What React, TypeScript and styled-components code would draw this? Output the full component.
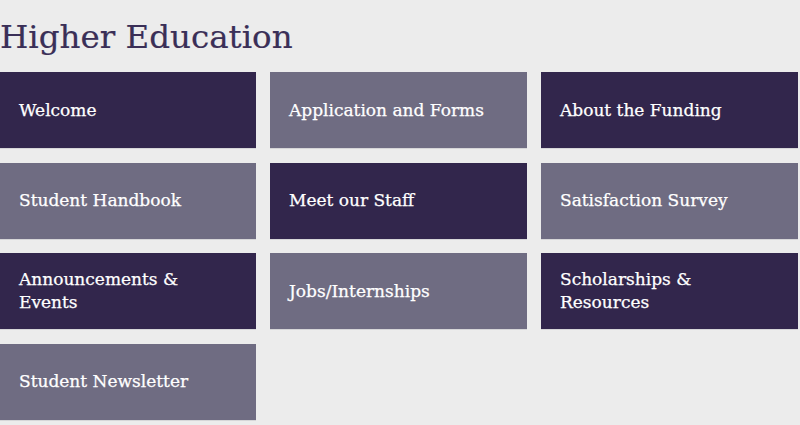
import React from 'react';
import styled, { createGlobalStyle } from 'styled-components';

const GlobalStyle = createGlobalStyle`
  html, body {
    margin: 0;
    padding: 0;
    background: #ececec;
  }
  body {
    font-family: "DejaVu Serif", "Liberation Serif", serif;
  }
`;

type Tone = 'dark' | 'light';

interface Tile {
  label: string;
  tone: Tone;
}

const tiles: Tile[] = [
  { label: 'Welcome', tone: 'dark' },
  { label: 'Application and Forms', tone: 'light' },
  { label: 'About the Funding', tone: 'dark' },
  { label: 'Student Handbook', tone: 'light' },
  { label: 'Meet our Staff', tone: 'dark' },
  { label: 'Satisfaction Survey', tone: 'light' },
  { label: 'Announcements & Events', tone: 'dark' },
  { label: 'Jobs/Internships', tone: 'light' },
  { label: 'Scholarships & Resources', tone: 'dark' },
  { label: 'Student Newsletter', tone: 'light' },
];

const Page = styled.div`
  width: 800px;
  padding: 0 2px 0 0;
  box-sizing: border-box;
`;

const Title = styled.h1`
  margin: 0;
  padding: 14px 0 0 0;
  height: 72px;
  box-sizing: border-box;
  font-family: "DejaVu Serif", serif;
  font-weight: normal;
  font-size: 32.5px;
  line-height: 46px;
  color: #3a2f57;
  -webkit-text-stroke: 0.2px #3a2f57;
`;

const Grid = styled.div`
  display: grid;
  grid-template-columns: 256px 257px 257px;
  grid-auto-rows: 77px;
  column-gap: 14px;
  row-gap: 13.67px;
`;

const TileLink = styled.a<{ $tone: Tone }>`
  display: flex;
  align-items: center;
  padding: 0 40px 0 19px;
  box-sizing: border-box;
  background: ${({ $tone }) => ($tone === 'dark' ? '#32264c' : '#6f6c82')};
  border-bottom: 1px solid #d6d6d8;
  color: #ffffff;
  text-decoration: none;
  font-family: "DejaVu Serif", serif;
  font-size: 17px;
  line-height: 23px;
  -webkit-text-stroke: 0.25px #ffffff;
`;

export default function App() {
  return (
    <Page>
      <GlobalStyle />
      <Title>Higher Education</Title>
      <Grid>
        {tiles.map((t) => (
          <TileLink key={t.label} href="#" $tone={t.tone}>
            {t.label}
          </TileLink>
        ))}
      </Grid>
    </Page>
  );
}
